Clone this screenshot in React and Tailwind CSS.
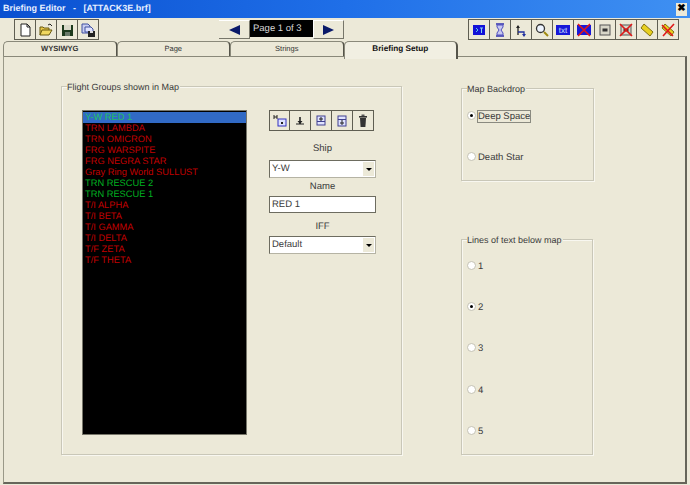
const font = { fontFamily: '"Liberation Sans", Arial, sans-serif' };

const Btn = ({ children, w = 'w-[22px]', h = 'h-[21px]' }) => (
  <div className={`${w} ${h} flex items-center justify-center border border-[#5f5e52] bg-[#ece9d8] -ml-px first:ml-0`}>{children}</div>
);

const S = ({ children }) => <svg width="16" height="16" viewBox="0 0 16 16">{children}</svg>;

const NewIcon = () => <S><path d="M4 2h6l3 3v9H4z" fill="#fff" stroke="#222" /><path d="M10 2v3h3" fill="none" stroke="#222" /></S>;
const OpenIcon = () => <S><path d="M2 13V5h3l1 1h5v2" fill="#e8c84a" stroke="#6a5a10" /><path d="M2 13l2-5h10l-3 5z" fill="#f0d860" stroke="#6a5a10" /><path d="M10 3l2-1 2 2" fill="none" stroke="#222" /></S>;
const SaveIcon = () => <S><rect x="3" y="3" width="11" height="11" fill="#1d3a1d" /><rect x="5" y="3" width="7" height="5" fill="#d8d8c8" /><rect x="6" y="10" width="5" height="4" fill="#6a7a6a" /></S>;
const SaveAllIcon = () => <S><path d="M2 2h6l2 2v7H2z" fill="#c8cdf0" stroke="#4050a0" /><path d="M5 5h6l2 2v3H5z" fill="#dfe2ff" stroke="#4050a0" /><rect x="8" y="9" width="7" height="6" fill="#222" /><rect x="10" y="9" width="3" height="2" fill="#ddd" /></S>;
const BlueT = () => <S><rect x="2" y="3" width="12" height="10" fill="#1212d8" /><path d="M5 6l2 2-2 2" fill="none" stroke="#5fc8e8" /><path d="M9 6h3M10.5 6v5" stroke="#8ad0f0" /></S>;
const Hourglass = () => <S><path d="M4 2h8M4 14h8" stroke="#3030b0" strokeWidth="1.6" /><path d="M5 3h6v2L9 8l2 3v2H5v-2l2-3-2-3z" fill="#c8c8f0" stroke="#5050c0" /></S>;
const Arrows = () => <S><path d="M5 13V4" stroke="#222" strokeWidth="1.3" /><path d="M3 6l2-3 2 3z" fill="#222" /><path d="M5 10h6v3" fill="none" stroke="#2030a0" strokeWidth="1.3" /><path d="M9 12l2 3 2-3z" fill="#2030a0" /></S>;
const Zoom = () => <S><circle cx="6.5" cy="6.5" r="4" fill="#eef4ff" stroke="#333" strokeWidth="1.3" /><path d="M10 10l4 4" stroke="#a08a10" strokeWidth="2" /></S>;
const TxtIcon = () => <S><rect x="1" y="3" width="14" height="10" fill="#1818d8" /><text x="8" y="11" textAnchor="middle" fontSize="8" fill="#cfe0ff" style={font}>txt</text></S>;
const TxtX = () => <S><rect x="1" y="3" width="14" height="10" fill="#1818d8" /><path d="M2 2l12 12M14 2L2 14" stroke="#e01818" strokeWidth="1.6" /></S>;
const BoxIcon = () => <S><rect x="3" y="3" width="10" height="10" fill="#d8d6c8" stroke="#555" /><rect x="5.5" y="6.5" width="5" height="3" fill="#333" /></S>;
const BoxX = () => <S><rect x="3" y="3" width="10" height="10" fill="#d8d6c8" stroke="#555" /><rect x="5.5" y="6.5" width="5" height="3" fill="#333" /><path d="M2 2l12 12M14 2L2 14" stroke="#e01818" strokeWidth="1.6" /></S>;
const Tag = () => <S><path d="M5 2l9 8-3 4-9-8z" fill="#e8d020" stroke="#807010" /></S>;
const TagX = () => <S><path d="M5 2l9 8-3 4-9-8z" fill="#e8d020" stroke="#807010" /><path d="M2 3l11 11M14 2L3 14" stroke="#e01818" strokeWidth="1.6" /></S>;
const AddIcon = () => <S><path d="M2 2v4M5 2v4M2 4h3" stroke="#222" /><rect x="6" y="6" width="8" height="7" fill="#dfe2ff" stroke="#3030c0" /><rect x="9" y="9" width="2" height="2" fill="#222" /></S>;
const DownIcon = () => <S><path d="M8 4v7" stroke="#222" strokeWidth="1.6" /><path d="M5.5 8l2.5 3 2.5-3z" fill="#222" /><path d="M4 11h8" stroke="#222" /></S>;
const MoveUp = () => <S><rect x="4" y="3" width="8" height="9" fill="#dfe2ff" stroke="#404090" /><path d="M8 4v5M6 6h4" stroke="#222" /><path d="M4 8.5h8" stroke="#404090" /></S>;
const MoveDown = () => <S><rect x="4" y="3" width="8" height="10" fill="#dfe2ff" stroke="#404090" /><path d="M8 7v5M6 10h4" stroke="#222" /><path d="M4 6.5h8" stroke="#404090" /></S>;
const Trash = () => <S><path d="M5 5h6l-.6 9H5.6z" fill="#333" /><rect x="4" y="3" width="8" height="1.6" fill="#333" /><rect x="6.5" y="1.5" width="3" height="1.5" fill="#555" /></S>;

const Tab = ({ label, active, bold }) => (
  <div className={`w-[114.5px] -mr-px border border-b-0 border-[#8a897a] border-r-[#55544a] border-r-2 rounded-t-[5px] flex items-center justify-center leading-none ${active ? 'h-[18px] bg-[#f1efe2] font-bold text-[8.2px] text-[#111] -mb-[3px] relative z-10 pb-[3px]' : 'h-[15px] text-[7.5px] text-[#333]'} ${bold ? 'font-bold !text-[7.6px] text-[#111]' : ''}`}>
    {label}
  </div>
);

const Group = ({ title, className, children }) => (
  <div className={`relative border border-[#c9c7b8] shadow-[inset_1px_1px_0_#f8f7f0,1px_1px_0_#f8f7f0] ${className}`}>
    <span className="absolute -top-[6px] left-[5px] bg-[#ece9d8] pr-px text-[9px] leading-[12px] text-[#3a3a3a] whitespace-nowrap">{title}</span>
    {children}
  </div>
);

const Radio = ({ label, checked, focus, className = '' }) => (
  <div className={`flex items-center h-[14px] ${className}`}>
    <div className="w-[9px] h-[9px] rounded-full bg-white border border-[#c4c2b4] flex items-center justify-center shrink-0">
      {checked && <div className="w-[3px] h-[3px] rounded-full bg-black" />}
    </div>
    <span className={`ml-[1px] px-px text-[9.5px] leading-[13px] text-[#3a3a3a] ${label.length === 1 ? 'mt-[3px]' : 'mt-[2px]'} ${focus ? 'outline outline-1 -outline-offset-1 outline-[#8a8a80]' : ''}`}>{label}</span>
  </div>
);

const Select = ({ value, down }) => (
  <div className="w-[107px] h-[18px] flex items-center justify-between bg-white border border-[#6d6c60] border-b-[#b5b3a4] border-r-[#b5b3a4] pl-[2px] text-[9.5px] text-[#3a3a3a]">
    <span className={down ? 'pt-[1px]' : ''}>{value}</span>
    <div className="w-[11px] h-[14px] mr-px bg-[#ece9d8] flex items-center justify-center">
      <div className="w-0 h-0 border-l-[3px] border-r-[3px] border-t-[3px] border-l-transparent border-r-transparent border-t-black" />
    </div>
  </div>
);

const ships = [
  ['Y-W RED 1', 'text-[#22c060]'],
  ['TRN LAMBDA', 'text-[#c00000]'],
  ['TRN OMICRON', 'text-[#c00000]'],
  ['FRG WARSPITE', 'text-[#c00000]'],
  ['FRG NEGRA STAR', 'text-[#c00000]'],
  ['Gray Ring World SULLUST', 'text-[#c00000]'],
  ['TRN RESCUE 2', 'text-[#00b020]'],
  ['TRN RESCUE 1', 'text-[#00b020]'],
  ['T/I ALPHA', 'text-[#c00000]'],
  ['T/I BETA', 'text-[#c00000]'],
  ['T/I GAMMA', 'text-[#c00000]'],
  ['T/I DELTA', 'text-[#c00000]'],
  ['T/F ZETA', 'text-[#c00000]'],
  ['T/F THETA', 'text-[#c00000]'],
];

export default function App() {
  return (
    <div style={font} className="w-[690px] h-[485px] bg-[#ece9d8] overflow-hidden flex flex-col [text-rendering:geometricPrecision]">
      <div className="h-[18px] shrink-0 flex items-center justify-between pl-[3px] pr-[3px] bg-[linear-gradient(90deg,#0a50d0,#1f6fe8_50%,#3f90f2)]">
        <span className="text-[9px] font-bold text-[#e8f0ff] whitespace-pre">Briefing Editor   -   [ATTACK3E.brf]</span>
        <div className="w-[11px] h-[13px] bg-[#ece9d8] flex items-center justify-center text-[10px] font-bold leading-none text-black">✖</div>
      </div>

      <div className="h-[23px] shrink-0 flex items-center pl-[14px] pr-[11px]">
        <div className="flex">
          <Btn><NewIcon /></Btn><Btn><OpenIcon /></Btn><Btn><SaveIcon /></Btn><Btn><SaveAllIcon /></Btn>
        </div>
        <div className="flex ml-[120px]">
          <div className="w-[31px] h-[19px] flex items-center justify-center border-r border-b border-[#77766a] border-t border-t-white">
            <div className="w-0 h-0 border-y-[5px] border-y-transparent border-r-[11px] border-r-[#0a1a6a]" />
          </div>
          <div className="w-[63px] h-[17px] bg-black text-[#d8d8d8] text-[9.5px] leading-[17px] pl-[3px]">Page 1 of 3</div>
          <div className="w-[31px] h-[19px] flex items-center justify-center border-l border-b border-r border-[#77766a] border-l-white border-t border-t-white">
            <div className="w-0 h-0 border-y-[5px] border-y-transparent border-l-[11px] border-l-[#0a1a6a]" />
          </div>
        </div>
        <div className="flex ml-auto">
          <Btn><BlueT /></Btn><Btn><Hourglass /></Btn><Btn><Arrows /></Btn><Btn><Zoom /></Btn><Btn><TxtIcon /></Btn>
          <Btn><TxtX /></Btn><Btn><BoxIcon /></Btn><Btn><BoxX /></Btn><Btn><Tag /></Btn><Btn><TagX /></Btn>
        </div>
      </div>

      <div className="flex h-[15px] shrink-0 pl-[3px]">
        <Tab label="WYSIWYG" bold /><Tab label="Page" /><Tab label="Strings" /><Tab label="Briefing Setup" active />
      </div>

      <div className="ml-[3px] mr-[3px] mb-[1px] h-[428px] border-2 border-t border-l-[#9a9988] border-l border-t-[#8a897a] border-r-[#66655a] border-b-[#66655a] flex pl-[57px] pt-[29px]">
        <Group title="Flight Groups shown in Map" className="w-[341px] h-[369px] pl-[20px] pt-[23px] flex">
          <div className="w-[165px] h-[325px] bg-black border border-[#77766a] pt-[1px] text-[9.3px] leading-[11px]">
            {ships.map(([n, c], i) => (
              <div key={n} className={`h-[11px] pl-[2px] whitespace-nowrap ${c} ${i === 0 ? 'bg-[#316ac5]' : ''}`}>{n}</div>
            ))}
          </div>
          <div className="ml-[22px] w-[107px] flex flex-col items-center text-[9.5px] text-[#3a3a3a]">
            <div className="flex self-start">
              <Btn w="w-[21px]"><AddIcon /></Btn><Btn><DownIcon /></Btn><Btn><MoveUp /></Btn><Btn><MoveDown /></Btn><Btn><Trash /></Btn>
            </div>
            <div className="mt-[12px] h-[12px] leading-[12px]">Ship</div>
            <div className="mt-[5px]"><Select value="Y-W" /></div>
            <div className="mt-[3px] h-[12px] leading-[12px]">Name</div>
            <div className="mt-[3px] w-[107px] h-[17px] bg-white border border-[#6d6c60] pl-[2px] leading-[15px]">RED 1</div>
            <div className="mt-[8px] h-[12px] leading-[12px]">IFF</div>
            <div className="mt-[3px]"><Select value="Default" down /></div>
          </div>
        </Group>

        <div className="ml-[59px] flex flex-col">
          <Group title="Map Backdrop" className="w-[133px] h-[93px] mt-[2px] pl-[5px] pt-[19px]">
            <Radio label="Deep Space" checked focus />
            <Radio label="Death Star" className="mt-[27px]" />
          </Group>
          <Group title="Lines of text below map" className="w-[132px] h-[216px] mt-[58px] pl-[5px] pt-[18px]">
            <Radio label="1" />
            <Radio label="2" checked className="mt-[27px]" />
            <Radio label="3" className="mt-[27px]" />
            <Radio label="4" className="mt-[28px]" />
            <Radio label="5" className="mt-[27px]" />
          </Group>
        </div>
      </div>
    </div>
  );
}
